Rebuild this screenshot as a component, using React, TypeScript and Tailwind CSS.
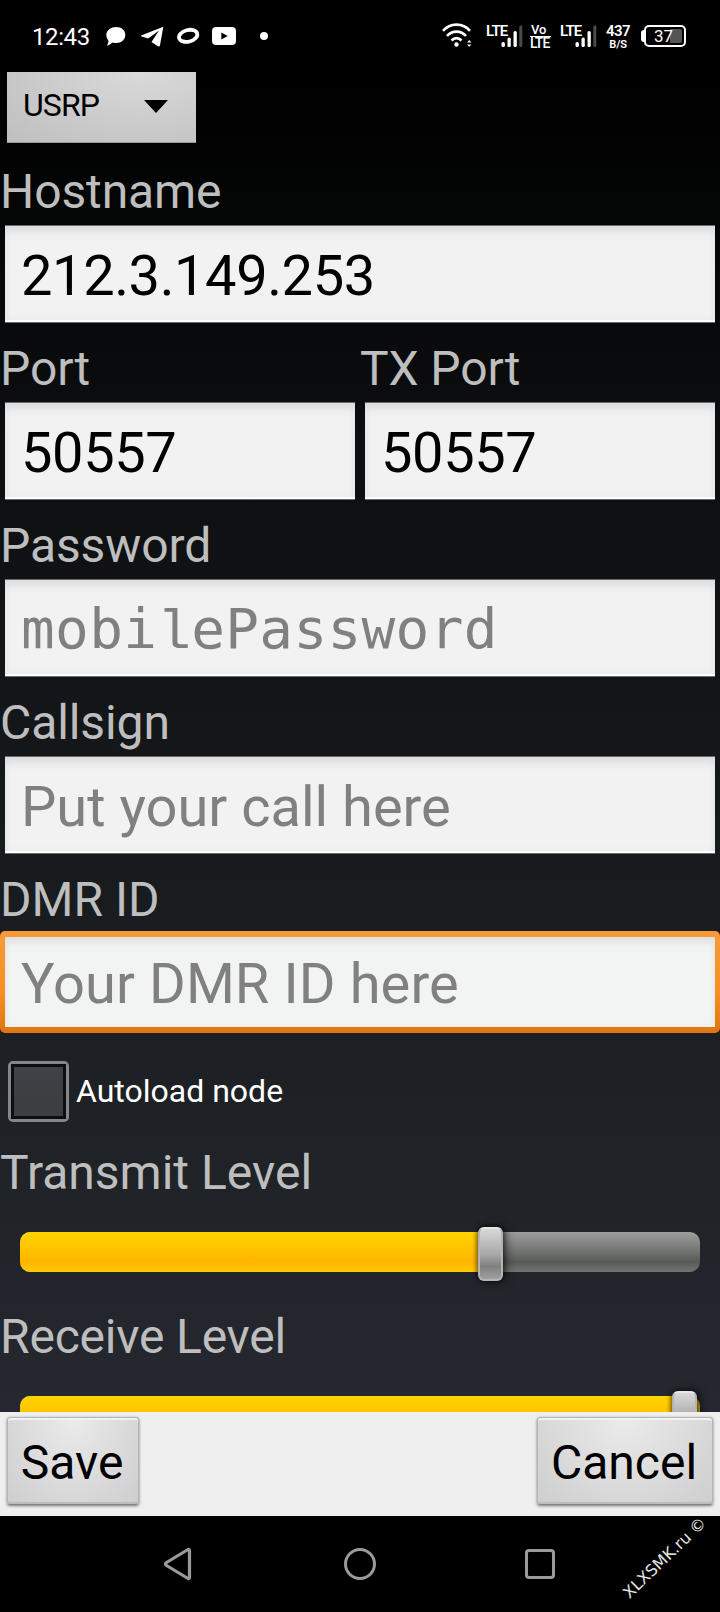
import type { ReactNode } from "react";

function Label({ children }: { children: ReactNode }) {
  return (
    <div className="h-[61px] whitespace-pre text-[48px] leading-[56px] tracking-[-0.1px] text-[#bebebe]">
      {children}
    </div>
  );
}

function TextBox({ value, children }: { value?: string; children?: ReactNode }) {
  return (
    <div className="mx-[5px] h-[98px] border-y border-[#6b6b6b]">
      <div
        className={
          "flex h-[96px] items-center whitespace-pre border-b-2 border-white bg-[#f2f2f2] pl-[16px] pt-[5px] text-[56px] leading-[66px] shadow-[inset_0_8px_10px_-3px_#d9dbdb,inset_0_0_7px_#e6e8ea] " +
          (value ? "tracking-[-0.4px] text-black" : "text-[#808080]")
        }
      >
        {value ?? children}
      </div>
    </div>
  );
}

function Slider({ left, fill }: { left: string; fill: string }) {
  return (
    <div className="relative mx-5 h-10 rounded-[10px] bg-[linear-gradient(#9c9d9c,#7e807e_35%,#585a57_75%,#727472)]">
      <div className={"h-10 rounded-l-[10px] bg-[linear-gradient(#ffd400,#ffc600_35%,#ffb400_75%,#ffcb00)] " + fill} />
      <div
        className={
          "absolute -top-[5px] h-[54px] w-[25px] rounded-[6px] border-2 border-[#b4b4b4] border-t-[#e6e6e6] bg-[linear-gradient(#d8d8d8,#a8a8a8_50%,#808080_75%,#a0a0a0)] shadow-[0_0_5px_1px_rgba(0,0,0,0.6),4px_0_10px_rgba(0,0,0,0.4)] " +
          left
        }
      />
    </div>
  );
}

function PushButton({ children, width }: { children: ReactNode; width: string }) {
  return (
    <button
      className={
        "mt-[5px] h-[88px] rounded-[3px] border border-[#b4b4b4] border-b-[#858585] bg-[radial-gradient(ellipse_at_50%_0%,#ebebeb,#dedede_45%,#cecece)] pr-[2px] pt-[3px] text-[48px] leading-[56px] text-black shadow-[0_1px_3px_rgba(0,0,0,0.5),inset_0_2px_1px_#f4f4f4,inset_0_-2px_1px_#bcbcbc] " +
        width
      }
    >
      {children}
    </button>
  );
}

function CellSignal() {
  return (
    <div className="relative h-[23px] w-[37px]">
      <span className="absolute left-0 -top-[2px] text-[15px] font-semibold leading-[16px] tracking-[-0.9px]">LTE</span>
      <svg className="absolute inset-0" width="37" height="23" viewBox="0 0 37 23" fill="#fff">
        <rect x="15.5" y="17" width="3.4" height="5" rx="1.5" />
        <rect x="21.5" y="12.5" width="3.3" height="9.5" rx="1.5" />
        <rect x="27.5" y="6" width="3.3" height="16" rx="1.5" />
        <rect x="33.3" y="0.5" width="3" height="21.5" rx="1.3" fill="#4a4a4a" />
      </svg>
    </div>
  );
}

function StatusBar() {
  return (
    <header className="flex h-[72px] items-start bg-black text-white">
      <div className="ml-[32px] mt-[23px] w-[74px] text-[24px] leading-[28px] tracking-[-0.4px]">12:43</div>
      <svg className="mt-[26px]" width="20" height="21" viewBox="0 0 20 21" fill="#fff">
        <path d="M10.2 1C15.500 1 19.300 4.300 19.300 9S15.500 17 10.200 17C8.700 17 7.500 16.800 6.500 16.400C5 17.900 3 19.300.8 19.800C2 18.200 2.400 16.500 2.400 14.500C1.100 13 .3 11.200.3 9C.3 4.300 4.900 1 10.200 1Z" />
      </svg>
      <svg className="ml-[15px] mt-[26px]" width="23" height="22" viewBox="0 0 23 22" fill="#fff">
        <path d="M22.300.8L19 19.300C18.800 20.600 17.500 20.800 16.500 20.100L10.500 15.900L18 4.500L7.200 12.600L.6 10.600C-.2 10.300-.1 9.600.7 9.300Z" />
      </svg>
      <svg className="ml-[12px] mt-[26px]" width="24" height="20" viewBox="0 0 24 20">
        <ellipse cx="12.200" cy="9.900" rx="9.300" ry="5.800" fill="none" stroke="#fff" strokeWidth="3.800" transform="rotate(-14 12 10)" />
      </svg>
      <svg className="ml-[12px] mt-[27px]" width="24" height="18" viewBox="0 0 24 18">
        <rect width="24" height="18" rx="4" fill="#fff" />
        <path d="M9.300 5.500V12.500L15.800 9Z" fill="#000" />
      </svg>
      <div className="ml-6 mt-8 size-2 rounded-full bg-white" />
      <svg className="ml-[173px] mt-[23px]" width="32" height="25" viewBox="0 0 32 25" fill="none" stroke="#fff" strokeWidth="2.600">
        <path d="M2 7.800C9-.5 22-.5 29 7.800" />
        <path d="M6 13C11 7.200 20 7.200 25 13" />
        <path d="M10.500 17.500C13.500 14.300 17.500 14.300 20.500 17.500" />
        <circle cx="15.500" cy="21.500" r="2.200" fill="#fff" stroke="none" />
        <path d="M26 19.500L28.200 17L30.400 19.500ZM26 21.500H30.400L28.200 23.800Z" fill="#fff" stroke="none" />
      </svg>
      <div className="ml-[13px] mt-[25px]">
        <CellSignal />
      </div>
      <div className="ml-[7px] mt-[25px] w-[22px] font-medium">
        <div className="pl-px text-[13px] leading-[10px]">Vo</div>
        <div className="mt-px w-[21px] border-t border-white text-[14px] leading-[13px] tracking-[-1px]">LTE</div>
      </div>
      <div className="ml-[8px] mt-[25px]">
        <CellSignal />
      </div>
      <div className="ml-[8px] mt-[25px] w-[26px] text-center font-semibold">
        <div className="text-[15px] leading-[13px] tracking-[-0.6px]">437</div>
        <div className="text-[11px] leading-[13px] tracking-[-0.2px]">B/S</div>
      </div>
      <div className="ml-[10px] mt-[30px] h-[12px] w-[3px] rounded-l-[3px] bg-white" />
      <div className="relative mt-[25px] h-[22px] w-[42px] rounded-[5px] border-2 border-white">
        <div className="absolute right-[2px] top-[2px] h-[14px] w-[12px] rounded-r-[2px] bg-[#555]" />
        <div className="absolute left-[8px] top-0 text-[17px] leading-[18px]">37</div>
      </div>
    </header>
  );
}

export default function App() {
  return (
    <div className="flex h-[1612px] w-[720px] flex-col overflow-hidden bg-black font-[Roboto,sans-serif]">
      <StatusBar />
      <main className="h-[1340px] overflow-hidden bg-[linear-gradient(#000_0%,#0c0e10_28%,#15181b_52%,#1e2226_78%,#25282f_100%)]">
        <div className="ml-[7px] flex h-[71px] w-[189px] items-start border-b border-[#999] bg-[radial-gradient(ellipse_at_70%_0%,#dadada,#cccccc_50%,#bfbfbf)] pl-[16px] text-[32px] text-black">
          <span className="mt-[14px] leading-[38px] tracking-[-0.9px]">USRP</span>
          <svg className="ml-[45px] mt-[28px]" width="24" height="13" viewBox="0 0 24 13">
            <path d="M0 0H24L12 13Z" />
          </svg>
        </div>
        <section className="mt-[21px] h-[177px]">
          <Label>Hostname</Label>
          <TextBox value="212.3.149.253" />
        </section>
        <div className="flex h-[177px]">
          <section className="w-[360px]">
            <Label>Port</Label>
            <TextBox value="50557" />
          </section>
          <section className="w-[360px]">
            <Label>TX Port</Label>
            <TextBox value="50557" />
          </section>
        </div>
        <section className="h-[177px]">
          <Label>Password</Label>
          <TextBox>
            <span className="pt-[2px] font-['DejaVu_Sans_Mono',monospace] tracking-[0.35px]">
              mobi<span className="font-['Liberation_Mono',monospace]">l</span>ePassword
            </span>
          </TextBox>
        </section>
        <section className="h-[177px]">
          <Label>Callsign</Label>
          <TextBox>Put your call here</TextBox>
        </section>
        <section className="h-[188px]">
          <div className="h-[59px] text-[48px] leading-[56px] text-[#bebebe]">DMR ID</div>
          <div className="h-[102px] rounded-[5px] bg-[linear-gradient(#f79a38,#f68f20_60%,#df7512)] px-[5px] py-[6px]">
            <div className="flex h-[90px] items-center bg-[#f2f3f3] pl-[16px] pt-[3px] text-[56px] leading-[66px] tracking-[0.1px] text-[#808080] shadow-[inset_0_7px_8px_-3px_#dcdcdc,inset_0_0_5px_#e6e8ea]">
              Your DMR ID here
            </div>
          </div>
        </section>
        <div className="flex h-[85px] items-start pl-[8px] pt-px">
          <div className="size-[61px] rounded-[5px] border-[3px] border-[#84878a]">
            <div className="size-[55px] border-[3px] border-[#0d0e0f] bg-[linear-gradient(#3f4246,#3b3d3f)]" />
          </div>
          <div className="ml-[7px] mt-[11px] text-[32px] leading-[38px] text-white">Autoload node</div>
        </div>
        <section className="h-[164px]">
          <div className="h-[87px] text-[48px] leading-[56px] text-[#bebebe]">Transmit Level</div>
          <Slider left="left-[458px]" fill="w-[470px]" />
        </section>
        <section className="h-[164px]">
          <div className="h-[87px] text-[48px] leading-[56px] tracking-[-0.2px] text-[#bebebe]">Receive Level</div>
          <Slider left="left-[652px]" fill="w-[680px] rounded-r-[10px]" />
        </section>
      </main>
      <footer className="flex h-[104px] items-start justify-between bg-[#efefef] px-[7px]">
        <PushButton width="w-[132px]">Save</PushButton>
        <PushButton width="w-[176px]">Cancel</PushButton>
      </footer>
      <nav className="relative flex h-[96px] items-center bg-black">
        <svg className="ml-[163px]" width="29" height="34" viewBox="0 0 29 34" fill="none" stroke="#9a9a9a" strokeWidth="3.200" strokeLinejoin="round">
          <path d="M25 2.500Q26.500 2 26.500 4V30Q26.500 32 25 31.500L3.500 18.500Q1.500 17 3.500 15.500Z" />
        </svg>
        <svg className="ml-[151px]" width="34" height="34" viewBox="0 0 34 34" fill="none" stroke="#9a9a9a" strokeWidth="3">
          <circle cx="17" cy="17" r="14.500" />
        </svg>
        <div className="ml-[148px] size-[30px] rounded-[4px] border-[3px] border-[#9a9a9a]" />
        <div className="absolute left-[605px] top-[32px] w-[120px] -rotate-[44deg] text-center font-['DejaVu_Sans',sans-serif] text-[16px] leading-[20px] text-[#e4e4e4]">
          XLXSMK.ru ©
        </div>
      </nav>
    </div>
  );
}
